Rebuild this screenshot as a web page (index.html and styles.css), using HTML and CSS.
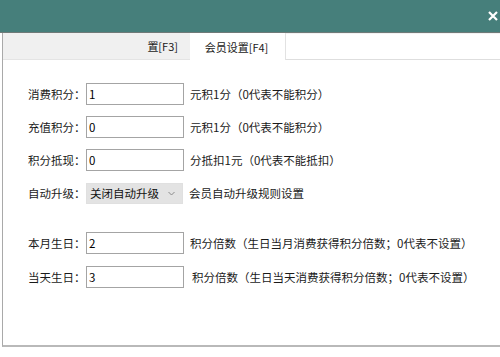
FILE: index.html
```html
<!DOCTYPE html>
<html lang="zh-CN">
<head>
<meta charset="utf-8">
<link rel="stylesheet" href="styles.css">
</head>
<body>
<div class="window">
  <div class="titlebar">
    <svg class="close" width="10" height="10" viewBox="0 0 10 10"><path d="M1 1L9 9M9 1L1 9" stroke="#fff" stroke-width="2.2"/></svg>
  </div>
  <div class="frame">
    <div class="tabs">
      <div class="tab tab-inactive">置[F3]</div>
      <div class="tab tab-active">会员设置[F4]</div>
      <div class="tab-rest"></div>
    </div>
    <div class="content">
      <div class="row">
        <span class="label">消费积分：</span>
        <input class="field" type="text" value="1">
        <span class="note">元积1分（0代表不能积分）</span>
      </div>
      <div class="row">
        <span class="label">充值积分：</span>
        <input class="field" type="text" value="0">
        <span class="note">元积1分（0代表不能积分）</span>
      </div>
      <div class="row">
        <span class="label">积分抵现：</span>
        <input class="field" type="text" value="0">
        <span class="note">分抵扣1元（0代表不能抵扣）</span>
      </div>
      <div class="row">
        <span class="label">自动升级：</span>
        <div class="select">
          <span>关闭自动升级</span>
          <svg width="7" height="5" viewBox="0 0 7 5"><path d="M0.5 1L3.5 4L6.5 1" fill="none" stroke="#8a8a8a" stroke-width="1"/></svg>
        </div>
        <span class="note">会员自动升级规则设置</span>
      </div>
      <div class="row row-group">
        <span class="label">本月生日：</span>
        <input class="field" type="text" value="2">
        <span class="note">积分倍数（生日当月消费获得积分倍数；0代表不设置）</span>
      </div>
      <div class="row row-last">
        <span class="label">当天生日：</span>
        <input class="field" type="text" value="3">
        <span class="note note-shift">积分倍数（生日当天消费获得积分倍数；0代表不设置）</span>
      </div>
    </div>
  </div>
</div>
</body>
</html>
```
FILE: styles.css
```css
html, body {
  margin: 0;
  padding: 0;
  background: #ffffff;
}
body {
  font-family: "Noto Sans CJK SC", "Noto Sans", sans-serif;
  font-size: 11.5px;
  color: #1a1a1a;
}
.window {
  width: 500px;
  height: 357px;
  display: flex;
  flex-direction: column;
  background: #ffffff;
}
.titlebar {
  height: 32px;
  background: #467f7b;
  border-bottom: 1px solid #6f7a78;
  display: flex;
  align-items: center;
  justify-content: flex-end;
  padding-right: 2px;
}
.close {
  display: block;
}
.frame {
  margin-left: 2px;
  border-left: 1px solid #a9a9a9;
  border-bottom: 2px solid #b9b9b9;
  height: 312px;
  display: flex;
  flex-direction: column;
}
.tabs {
  height: 27px;
  display: flex;
  font-size: 11px;
}
.tab {
  display: flex;
  align-items: center;
  height: 27px;
  box-sizing: border-box;
}
.tab-inactive {
  width: 187px;
  background: #f0f0f0;
  border-bottom: 1px solid #e4e4e4;
  justify-content: flex-end;
  padding-right: 12px;
}
.tab-active {
  width: 96px;
  background: #ffffff;
  border-right: 1px solid #e2e2e2;
  justify-content: center;
  padding-left: 2px;
  padding-right: 4px;
}
.tab-rest {
  flex: 1;
  height: 27px;
  box-sizing: border-box;
  border-top: 1px solid #f2f2f2;
  border-bottom: 1px solid #dedede;
}
.content {
  padding: 23px 0 0 25px;
  display: flex;
  flex-direction: column;
  gap: 11px;
}
.row {
  display: flex;
  align-items: center;
  height: 22px;
}
.row-group {
  margin-top: 17px;
}
.row-last {
  margin-top: 1px;
}
.label {
  width: 58px;
  white-space: nowrap;
}
.field {
  width: 98px;
  height: 22px;
  box-sizing: border-box;
  border: 1px solid #a4a4a4;
  padding: 0 2px;
  margin: 0;
  font-family: inherit;
  font-size: 11.5px;
  color: #000;
  background: #fff;
  outline: none;
}
.select {
  width: 97px;
  height: 21px;
  box-sizing: border-box;
  background: #e3e3e3;
  border: 1px solid #e0e0e0;
  display: flex;
  align-items: center;
  justify-content: space-between;
  padding: 0 7px 0 3px;
  color: #111;
}
.select svg {
  display: block;
}
.note {
  margin-left: 6px;
  white-space: nowrap;
}
.note-shift {
  margin-left: 8px;
}
```
